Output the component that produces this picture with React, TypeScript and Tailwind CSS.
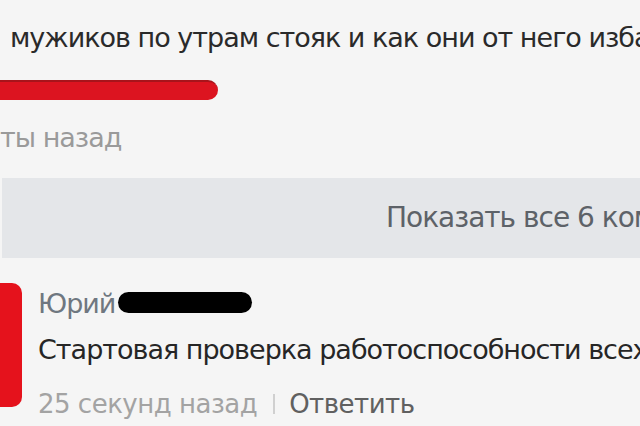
import React from "react";

export default function App() {
  return (
    <div
      className="w-[640px] h-[426px] overflow-hidden bg-[#f5f5f5] text-[#2b2b2b]"
      style={{ fontFamily: '"DejaVu Sans", Verdana, sans-serif' }}
    >
      {/* top comment tail */}
      <div className="pt-[22px] pl-[10px] h-[62px] whitespace-nowrap text-[27px] leading-[32px] tracking-[-1px] text-[#2a2a2a]">
        мужиков по утрам стояк и как они от него избавляются
      </div>
      <div className="mt-[18px] h-[20px] w-[218px] rounded-r-full bg-[#dc1420] border-t-2 border-[#a8141b]" />
      <div className="mt-[22px] h-[32px] whitespace-nowrap text-[27px] leading-[32px] tracking-[-1px] text-[#9a9a9a]">
        ты назад
      </div>

      {/* show all band */}
      <div className="mt-[24px] ml-[2px] h-[80px] bg-[#e4e6e9] flex items-center pl-[384px] whitespace-nowrap text-[28px] tracking-[-1px] text-[#5d6268]">
        Показать все 6 комментариев
      </div>

      {/* last comment */}
      <div className="mt-[25px] flex">
        <div className="w-[22px] h-[124px] rounded-r-[10px] bg-[#e5121c] shrink-0" />
        <div className="ml-[16px] flex flex-col">
          <div className="flex items-center h-[32px] mt-[5px] whitespace-nowrap">
            <span className="text-[27px] leading-[32px] tracking-[-1px] text-[#6f7780]">Юрий</span>
            <span className="ml-[3px] w-[134px] h-[21px] rounded-full bg-black -mt-[4px]" />
          </div>
          <div className="mt-[14px] h-[32px] whitespace-nowrap text-[27px] leading-[32px] tracking-[-1px] text-[#262626]">
            Стартовая проверка работоспособности всех систем
          </div>
          <div className="mt-[22px] h-[32px] whitespace-nowrap text-[26px] leading-[32px] tracking-[-0.5px] flex items-center">
            <span className="text-[#a3a3a3]">25 секунд назад</span>
            <span className="ml-[16px] w-[2px] h-[20px] bg-[#d0d0d0]" />
            <span className="ml-[14px] text-[#606060]">Ответить</span>
          </div>
        </div>
      </div>
    </div>
  );
}
